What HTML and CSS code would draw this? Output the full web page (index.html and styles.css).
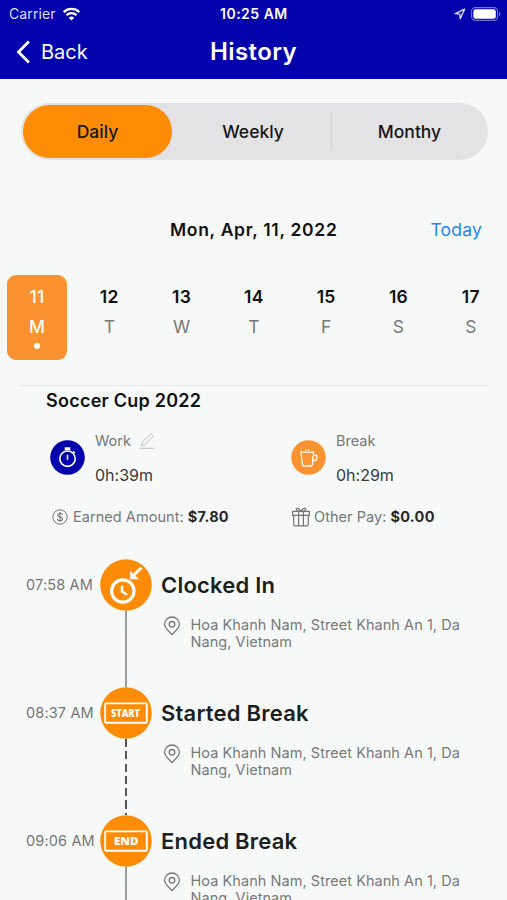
FILE: index.html
```html
<!DOCTYPE html>
<html lang="en">
<head>
<meta charset="utf-8">
<meta name="viewport" content="width=device-width, initial-scale=1">
<title>History</title>
<link rel="stylesheet" href="styles.css">
</head>
<body>
<svg class="symbols" aria-hidden="true">
  <symbol id="pin" viewBox="0 0 18 20"><path d="M9 18.6C6.6 16.2 1.6 12 1.6 8.2a7.4 7.2 0 0 1 14.8 0C16.4 12 11.4 16.2 9 18.6Z"/><circle cx="9" cy="8.3" r="2.8"/></symbol>
</svg>
<header class="header">
  <div class="status">
    <span class="carrier">Carrier</span>
    <svg class="wifi" viewBox="0 0 18 14"><path d="M1.2 5.1a11.2 11.2 0 0 1 15.6 0M4 8.1a7.2 7.2 0 0 1 10 0" fill="none" stroke="#fff" stroke-width="2.3"/><path d="M9 13.5 6.3 10.7a3.9 3.9 0 0 1 5.4 0Z" fill="#fff"/></svg>
    <span class="clock">10:25 AM</span>
    <svg class="locate" viewBox="0 0 12 12"><path d="M10.6 1.2 1.2 5.6l4.6.5.5 4.6Z" fill="none" stroke="#dcdcfa" stroke-width="1.3" stroke-linejoin="round"/></svg>
    <svg class="battery" viewBox="0 0 30 14"><rect x=".6" y=".6" width="26" height="12.8" rx="3.8" fill="none" stroke="#7474d4" stroke-width="1.1"/><rect x="2.4" y="2.3" width="22.4" height="9.4" rx="2.2" fill="#fff"/><path d="M28 4.8c2 .8 2 3.6 0 4.4Z" fill="#7474d4"/></svg>
  </div>
  <nav class="nav">
    <a class="back"><svg viewBox="0 0 14 24"><path d="M12.4 1.6 2 12l10.4 10.4" fill="none" stroke="#fff" stroke-width="2.8"/></svg><span>Back</span></a>
    <h1>History</h1>
  </nav>
</header>
<main>
  <div class="segments">
    <button class="segment active">Daily</button>
    <button class="segment">Weekly</button>
    <button class="segment last">Monthy</button>
  </div>
  <div class="date-row"><strong>Mon, Apr, 11, 2022</strong><a>Today</a></div>
  <div class="week">
    <div class="day selected"><b>11</b><span>M</span><i></i></div>
    <div class="day"><b>12</b><span>T</span></div>
    <div class="day"><b>13</b><span>W</span></div>
    <div class="day"><b>14</b><span>T</span></div>
    <div class="day"><b>15</b><span>F</span></div>
    <div class="day"><b>16</b><span>S</span></div>
    <div class="day"><b>17</b><span>S</span></div>
  </div>
  <section class="summary">
    <h2>Soccer Cup 2022</h2>
    <div class="stats">
      <div class="stat">
        <svg class="disc" viewBox="0 0 35 35"><circle cx="17.5" cy="17.5" r="17.3" fill="#0303ad"/><g fill="none" stroke="#fff"><circle cx="17.5" cy="18.7" r="7.7" stroke-width="1.6"/><path d="M14.7 8h5.6M14.7 9.6h5.6M17.5 14.7v5M23 11.4l1.9 1.6" stroke-width="1.5"/></g></svg>
        <div class="stat-text"><span class="label">Work<svg class="pencil" viewBox="0 0 16 16"><path d="M2.4 13 3.5 9 10.8 1.6q1-.9 2 0l.6.6q.9 1 0 2L6 11.6ZM.5 15.3h15" fill="none" stroke="#bdbfbf" stroke-width="1"/></svg></span><span class="value">0h:39m</span></div>
      </div>
      <div class="stat">
        <svg class="disc" viewBox="0 0 35 35"><circle cx="17.5" cy="17.5" r="17.3" fill="#fc9331"/><g fill="none" stroke="#fff" stroke-width="1.3"><path d="M10 12.2h12.6l-1.2 12.2q-.2 1.6-1.6 1.6h-6.8q-1.4 0-1.6-1.6ZM22.4 15.2h2.4q1.2 0 1.1 1.3l-.3 2.6q-.2 1.4-1.4 1.4h-2.2M14.8 10.8V9.2M17.7 10.8V9"/></g></svg>
        <div class="stat-text"><span class="label">Break</span><span class="value">0h:29m</span></div>
      </div>
    </div>
    <div class="pay">
      <div class="pay-item earned"><svg viewBox="0 0 16 16"><g fill="none" stroke="#737575"><circle cx="8" cy="8" r="7.2" stroke-width="1"/><path d="M10.4 5.8Q10 4.3 8 4.3T5.7 6Q5.7 7.5 8 7.9T10.5 10Q10.4 11.7 8 11.7T5.5 10M8 3v10" stroke-width="1.1"/></g></svg><span>Earned Amount:</span><b>$7.80</b></div>
      <div class="pay-item other"><svg viewBox="0 0 18 20"><g fill="none" stroke="#737575" stroke-width="1.2"><path d="M.6 4.4h16.8v4H.6ZM1.7 8.4h14.6v9q0 1.4-1.4 1.4H3.1q-1.4 0-1.4-1.4ZM6.6 4.4v14.4M11.4 4.4v14.4M9 4.3C7.4 1.4 5.4.6 4.5 1.4S5 4.3 9 4.3c4 0 5.4-2.1 4.5-2.9S10.6 1.4 9 4.3Z"/></g></svg><span>Other Pay:</span><b>$0.00</b></div>
    </div>
  </section>
  <section class="timeline">
    <article class="event">
      <time>07:58 AM</time>
      <div class="track"><svg viewBox="0 0 52 52"><circle cx="26" cy="26" r="25.8" fill="#ff8c05"/><g fill="none" stroke="#fff"><circle cx="22.8" cy="32" r="11.2" stroke-width="3.2"/><path d="M22 26.5v6l5 3.2" stroke-width="2.5"/><path d="M41.5 8.5 33 17" stroke-width="3"/></g><path d="M30.2 11.8v8.5h8.6Z" fill="#fff"/></svg><span class="line"></span></div>
      <div class="details"><h3>Clocked In</h3><div class="place"><svg><use href="#pin"/></svg><p>Hoa Khanh Nam, Street Khanh An 1, Da<br>Nang, Vietnam</p></div></div>
    </article>
    <article class="event">
      <time>08:37 AM</time>
      <div class="track"><svg viewBox="0 0 52 52"><circle cx="26" cy="26" r="25.8" fill="#ff8c05"/><rect x="5.2" y="16.4" width="41.6" height="19.4" rx="1" fill="none" stroke="#fff" stroke-width="1.9"/><text x="11" y="30.1" textLength="29" lengthAdjust="spacingAndGlyphs">START</text></svg><span class="line dashed"></span></div>
      <div class="details"><h3>Started Break</h3><div class="place"><svg><use href="#pin"/></svg><p>Hoa Khanh Nam, Street Khanh An 1, Da<br>Nang, Vietnam</p></div></div>
    </article>
    <article class="event">
      <time>09:06 AM</time>
      <div class="track"><svg viewBox="0 0 52 52"><circle cx="26" cy="26" r="25.8" fill="#ff8c05"/><rect x="5.2" y="16.4" width="41.6" height="19.4" rx="1" fill="none" stroke="#fff" stroke-width="1.9"/><text class="end" x="14" y="30.3" textLength="24.5" lengthAdjust="spacingAndGlyphs">END</text></svg><span class="line"></span></div>
      <div class="details"><h3>Ended Break</h3><div class="place"><svg><use href="#pin"/></svg><p>Hoa Khanh Nam, Street Khanh An 1, Da<br>Nang, Vietnam</p></div></div>
    </article>
  </section>
</main>
</body>
</html>
```
FILE: styles.css
```css
* { box-sizing: border-box; }
body { margin: 0; height: 900px; overflow: hidden; background: #f7f9f9; color: #111; font-family: Inter, "Liberation Sans", sans-serif; }
h1, h2, h3, p { margin: 0; }
svg { display: block; flex: none; }
.symbols { width: 0; height: 0; position: absolute; }
.header { height: 79px; background: #0202ad; color: #fff; }
.status { display: grid; grid-template-columns: 53px 158px 1fr 17px 30px; height: 27px; padding: 0 6px 0 9px; align-items: center; font-size: 14px; }
.carrier { color: #dedefa; letter-spacing: 0.1px; }
.wifi { width: 19px; height: 14px; }
.clock { font-weight: 600; font-size: 14px; letter-spacing: 0.5px; }
.locate { width: 12px; height: 12px; }
.battery { width: 30px; height: 14px; }
.nav { height: 50px; display: grid; grid-template-columns: 1fr 90px 1fr; align-items: center; padding: 0 16px; }
.back { display: flex; align-items: center; gap: 10px; font-size: 20px; }
.back svg { width: 15px; height: 24px; }
.nav h1 { text-align: center; font-size: 24px; line-height: 30px; font-weight: 600; letter-spacing: 0.4px; }
.segments { display: grid; grid-template-columns: 149px 160px 1fr; height: 57px; margin: 24px 19px 0 21px; padding: 2px; border-radius: 29px; background: #e3e3e5; }
.segment { border: 0; padding: 0 0 0 2px; margin: 0; background: none; font: 450 17.5px Inter, sans-serif; color: #161616; }
.segment.active { background: #ff8c05; border-radius: 27px; padding: 0; }
.segment.last { box-shadow: inset 1px 0 #d3d3d6; margin: 7px 0 7px -1px; padding: 0 0 0 2px; }
.date-row { display: grid; grid-template-columns: 168px 170px 1fr; align-items: center; height: 30px; margin-top: 54px; padding-right: 25px; font-size: 17.5px; }
.date-row strong { grid-column: 2; font-weight: 600; white-space: nowrap; padding-left: 2px; letter-spacing: 0.7px; }
.date-row a { color: #2586f5; text-align: right; letter-spacing: 0.2px; }
.week { display: grid; grid-template-columns: repeat(7, 60px); column-gap: 12.3px; margin: 31px 0 0 7px; height: 85px; }
.day { display: flex; flex-direction: column; align-items: center; border-radius: 9px; padding-top: 11px; font-size: 17.5px; line-height: 22px; }
.day b { font-weight: 600; letter-spacing: 0.3px; }
.day span { color: #777979; margin-top: 8px; }
.selected { background: #f9922f; color: #fff; }
.selected b { font-weight: 500; }
.selected span { color: #fff; font-weight: 500; }
.selected i { width: 6px; height: 6px; border-radius: 50%; background: #fff; margin-top: 5px; }
.summary { margin: 25px 19px 0 21px; border-top: 1px solid #e5e7e7; }
.summary h2 { margin: 3px 0 0 25px; font-size: 18px; line-height: 24px; font-weight: 600; letter-spacing: 0.25px; }
.stats { display: grid; grid-template-columns: 241px 1fr; margin: 18px 0 0 29px; }
.stat { display: flex; gap: 10px; }
.disc { width: 35px; height: 35px; margin-top: 9px; }
.stat-text { display: flex; flex-direction: column; color: #747777; }
.label { display: flex; align-items: center; font-size: 14.5px; line-height: 20px; height: 20px; gap: 8px; }
.pencil { width: 16px; height: 16px; }
.value { font-size: 16px; line-height: 22px; margin-top: 13px; color: #363939; }
.pay { display: grid; grid-template-columns: 240px 1fr; margin: 19px 0 0 31px; height: 23px; }
.pay-item { display: flex; align-items: center; font-size: 14.5px; letter-spacing: 0.05px; color: #747777; white-space: nowrap; }
.pay-item svg { width: 16px; height: 16px; margin-right: 5px; }
.pay-item.other svg { width: 18px; height: 20px; margin-right: 4px; }
.pay-item b { color: #262829; font-weight: 700; margin-left: 4px; letter-spacing: 0.3px; }
.timeline { margin: 30.5px 0 0 26px; }
.event { display: grid; grid-template-columns: 73.5px 52px 1fr; height: 128px; }
.event time { height: 52px; line-height: 52px; font-size: 14.5px; letter-spacing: 0.15px; color: #747777; white-space: nowrap; }
.track { display: flex; flex-direction: column; align-items: center; }
.track svg { width: 52px; height: 52px; }
.track text { fill: #fff; font: 800 10.5px "Open Sans", sans-serif; }
.track .end { font-size: 11px; }
.line { width: 2px; flex: 1; background: #9a9c9c; }
.dashed { background: repeating-linear-gradient(#555757 0 8px, transparent 8px 12.3px); }
.details { padding-left: 9.5px; }
.details h3 { font-size: 22px; line-height: 52px; height: 52px; font-weight: 600; letter-spacing: 0.22px; color: #1c1e1f; }
.place { display: flex; gap: 10px; margin: 5px 0 0 1.5px; }
.place svg { width: 18px; height: 20px; fill: none; stroke: #777979; stroke-width: 1.3px; }
.place p { font-size: 14.5px; line-height: 17.2px; letter-spacing: 0.05px; color: #777979; white-space: nowrap; }
```
